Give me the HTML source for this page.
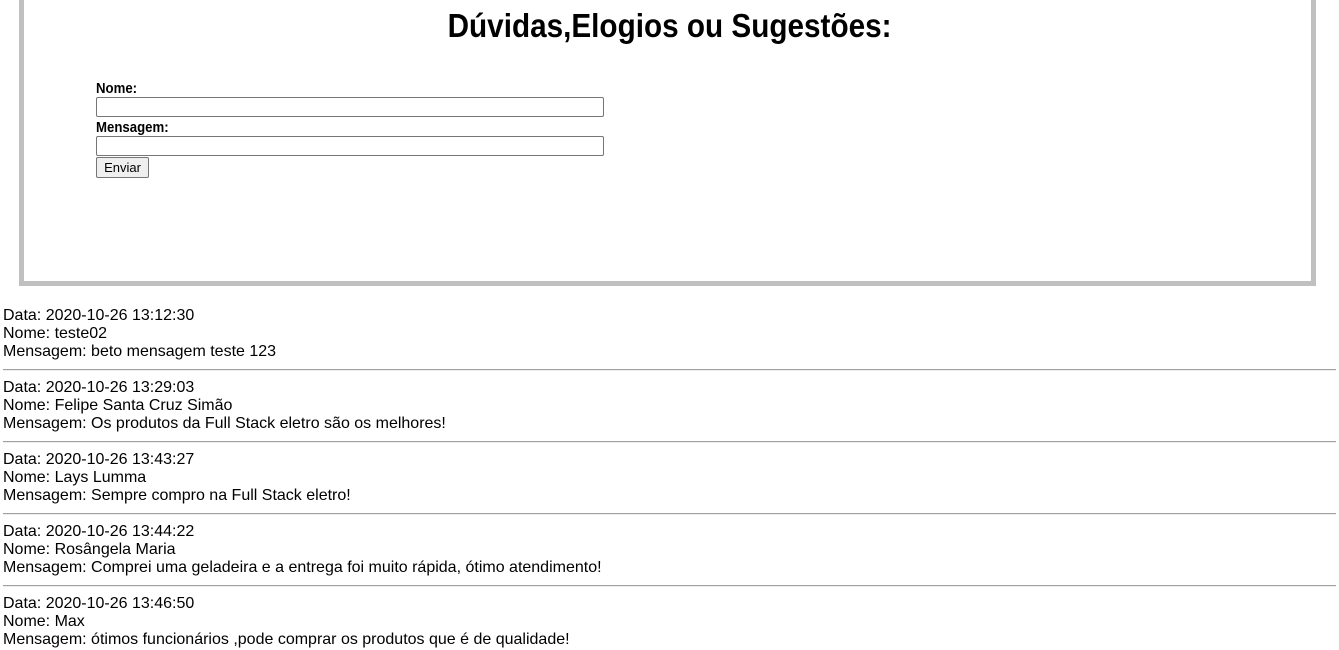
<!DOCTYPE html>
<html><head><meta charset="utf-8"><style>
body{margin:0;background:#fff;font-family:"Liberation Sans",Arial,sans-serif;color:#000;}
.box{position:absolute;left:19px;top:-20px;width:1287px;height:296px;border:5px solid #c0c0c0;}
h1{position:absolute;left:0;right:0;top:6px;margin:0;text-align:center;font-weight:bold;font-size:33px;line-height:40px;transform:scaleX(0.9);transform-origin:670px 0;}
.f{position:absolute;left:96px;font-size:15px;font-weight:bold;line-height:16px;transform:scaleX(0.88);transform-origin:0 0;}
.in{position:absolute;left:96px;width:506px;height:18px;border:1px solid #767676;border-radius:2px;}
.btn{position:absolute;left:96px;top:157px;width:51px;height:19px;border:1px solid #767676;border-radius:2px;background:#efefef;font-size:13px;line-height:19px;text-align:center;}
.list{position:absolute;left:3px;top:307px;right:3px;font-size:16px;line-height:18px;}
hr{margin:8px 0 8px;border:0;border-top:1px solid #a0a0a0;border-bottom:1px solid #eee;}
</style></head><body>
<div class="box"></div>
<h1>Dúvidas,Elogios ou Sugestões:</h1>
<div class="f" style="top:81px">Nome:</div>
<div class="in" style="top:97px"></div>
<div class="f" style="top:120px">Mensagem:</div>
<div class="in" style="top:136px"></div>
<div class="btn">Enviar</div>
<div class="list">
Data: 2020-10-26 13:12:30<br>Nome: teste02<br>Mensagem: beto mensagem teste 123<hr>
Data: 2020-10-26 13:29:03<br>Nome: Felipe Santa Cruz Simão<br>Mensagem: Os produtos da Full Stack eletro são os melhores!<hr>
Data: 2020-10-26 13:43:27<br>Nome: Lays Lumma<br>Mensagem: Sempre compro na Full Stack eletro!<hr>
Data: 2020-10-26 13:44:22<br>Nome: Rosângela Maria<br>Mensagem: Comprei uma geladeira e a entrega foi muito rápida, ótimo atendimento!<hr>
Data: 2020-10-26 13:46:50<br>Nome: Max<br>Mensagem: ótimos funcionários ,pode comprar os produtos que é de qualidade!
</div>
</body></html>
